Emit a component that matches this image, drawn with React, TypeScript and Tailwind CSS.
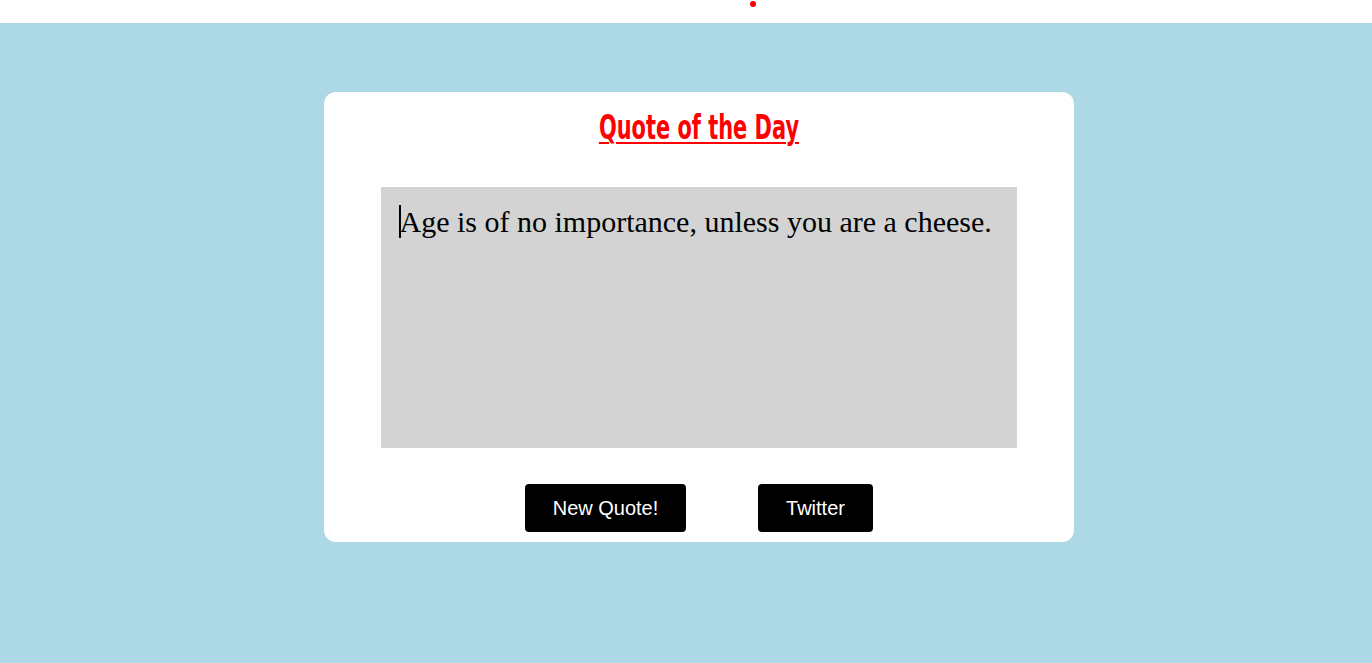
import React from "react";

const QuoteCard: React.FC = () => (
  <div className="flex h-[450px] w-[750px] flex-col items-center rounded-[12px] bg-white">
    <h1 className="mt-[16px] h-[40px] origin-center scale-x-[0.705] font-['DejaVu_Sans',sans-serif] text-[33px] font-bold leading-[40px] text-[#ff0000] underline decoration-[2px] underline-offset-[3px] font-stretch-condensed">
      Quote of the Day
    </h1>
    <div className="mt-[39px] h-[261px] w-[636px] bg-[#d3d3d3] px-[18px] pt-[12px]">
      <p className="font-['Liberation_Serif',serif] text-[30px] leading-[35px] text-black">
        <span className="mr-[-1px] inline-block h-[33px] w-[1.5px] translate-y-[6px] bg-black align-baseline" />
        Age is of no importance, unless you are a cheese.
      </p>
    </div>
    <div className="mt-[36px] flex gap-[72px] font-['Liberation_Sans',sans-serif] text-[20px] text-white">
      <button className="h-[48px] w-[161px] rounded-[4px] bg-black">New Quote!</button>
      <button className="h-[48px] w-[115px] rounded-[4px] bg-black">Twitter</button>
    </div>
  </div>
);

export default function App() {
  return (
    <div className="flex min-h-[663px] flex-col">
      <div className="relative h-[23px] bg-white">
        <span className="absolute left-[750px] top-[1px] h-[6px] w-[6px] rounded-full bg-[#ff0000]" />
      </div>
      <main className="flex flex-1 justify-center bg-[#add8e6] pt-[69px]">
        <div className="ml-[26px]">
          <QuoteCard />
        </div>
      </main>
    </div>
  );
}
